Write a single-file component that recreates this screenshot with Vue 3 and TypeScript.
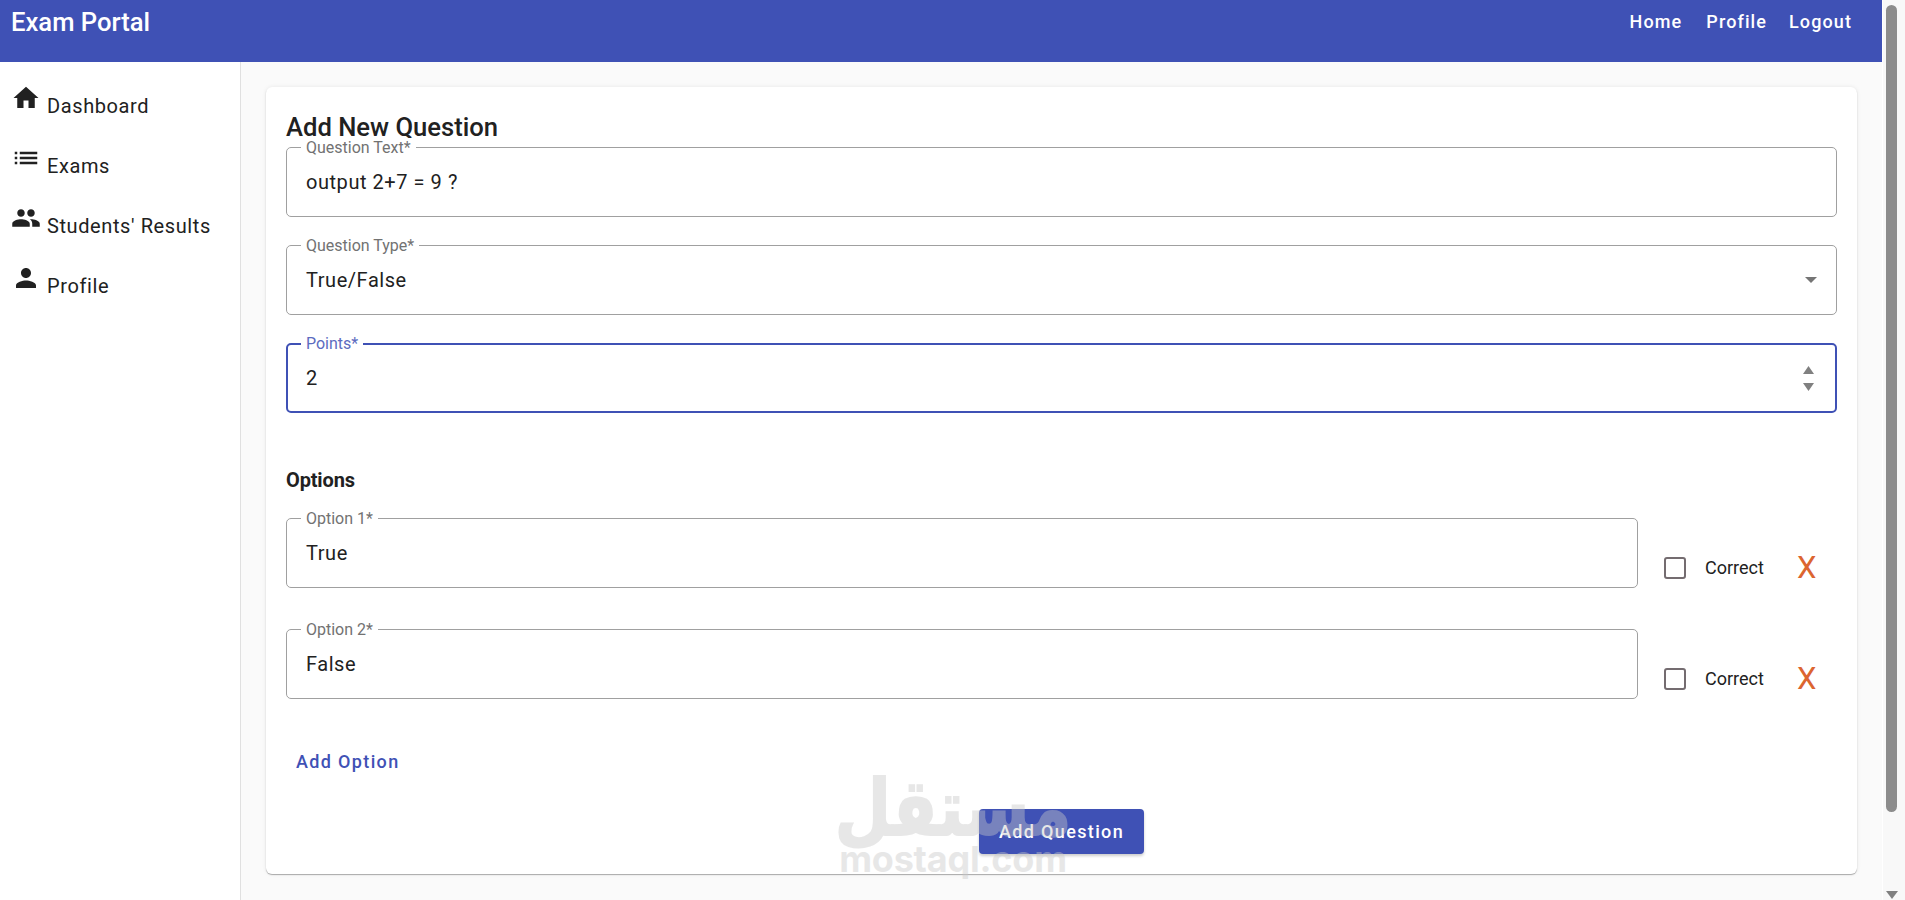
<script setup lang="ts">
const navLinks = ["Home", "Profile", "Logout"];

// MUI icon paths used in the sidebar
const sideItems = [
  { label: "Dashboard", path: "M10 20v-6h4v6h5v-8h3L12 3 2 12h3v8z" },
  { label: "Exams", path: "M3 13h2v-2H3zm0 4h2v-2H3zm0-8h2V7H3zm4 4h14v-2H7zm0 4h14v-2H7zM7 7v2h14V7z" },
  {
    label: "Students' Results",
    path: "M16 11c1.66 0 2.99-1.34 2.99-3S17.66 5 16 5c-1.66 0-3 1.34-3 3s1.34 3 3 3m-8 0c1.66 0 2.99-1.34 2.99-3S9.66 5 8 5C6.34 5 5 6.34 5 8s1.34 3 3 3m0 2c-2.33 0-7 1.17-7 3.5V19h14v-2.5c0-2.33-4.67-3.5-7-3.5m8 0c-.29 0-.62.02-.97.05 1.16.84 1.97 1.97 1.97 3.45V19h6v-2.5c0-2.33-4.67-3.5-7-3.5",
  },
  { label: "Profile", path: "M12 12c2.21 0 4-1.79 4-4s-1.79-4-4-4-4 1.79-4 4 1.79 4 4 4m0 2c-2.67 0-8 1.34-8 4v2h16v-2c0-2.66-5.33-4-8-4" },
];

const options = [
  { label: "Option 1*", value: "True" },
  { label: "Option 2*", value: "False" },
];
</script>

<template>
  <div class="window">
    <div class="page">
      <header class="topbar">
        <div class="brand">Exam Portal</div>
        <nav class="links">
          <a v-for="link in navLinks" :key="link" class="link">{{ link }}</a>
        </nav>
      </header>

      <div class="body-row">
        <aside class="sidebar">
          <div v-for="item in sideItems" :key="item.label" class="side-item">
            <svg class="side-icon" viewBox="0 0 24 24"><path :d="item.path" /></svg>
            <span class="side-label">{{ item.label }}</span>
          </div>
        </aside>

        <main class="content">
          <section class="card">
            <h2 class="title">Add New Question</h2>

            <div class="stack">
              <div class="field">
                <span class="field-label">Question Text*</span>
                <span class="value">output 2+7 = 9 ?</span>
              </div>

              <div class="field">
                <span class="field-label">Question Type*</span>
                <span class="value">True/False</span>
                <svg class="caret" viewBox="0 0 12 6"><path d="M0 0h12L6 6z" /></svg>
              </div>

              <div class="field focused">
                <span class="field-label">Points*</span>
                <span class="value">2</span>
                <span class="spinner">
                  <svg viewBox="0 0 11 8"><path d="M5.5 0 11 8H0z" /></svg>
                  <svg viewBox="0 0 11 8"><path d="M0 0h11L5.5 8z" /></svg>
                </span>
              </div>
            </div>

            <h3 class="options-title">Options</h3>

            <div class="option-list">
              <div v-for="opt in options" :key="opt.label" class="option-row">
                <div class="field grow">
                  <span class="field-label">{{ opt.label }}</span>
                  <span class="value">{{ opt.value }}</span>
                </div>
                <div class="option-controls">
                  <span class="checkbox"></span>
                  <span class="correct">Correct</span>
                  <span class="remove">X</span>
                </div>
              </div>
            </div>

            <div class="add-option">Add Option</div>

            <div class="submit-row">
              <button class="submit" type="button">Add Question</button>
            </div>
          </section>
        </main>
      </div>
    </div>

    <div class="scrollbar">
      <div class="thumb"></div>
      <svg class="arrow" viewBox="0 0 12 8"><path d="M0 0h12L6 8z" /></svg>
    </div>

    <!-- site watermark, lies over the page -->
    <div class="watermark">
      <div class="wm-ar" dir="rtl" lang="ar">مستقل</div>
      <div class="wm-en">mostaql.com</div>
    </div>
  </div>
</template>

<style>
html,
body {
  margin: 0;
  overflow: hidden;
}
</style>

<style scoped>
.window {
  position: relative;
  display: flex;
  width: 1905px;
  height: 900px;
  overflow: hidden;
  font-family: Roboto, "Liberation Sans", sans-serif;
  color: #212121;
  background: #fff;
}

.page {
  flex: 1;
  min-width: 0;
  display: flex;
  flex-direction: column;
}

.topbar {
  height: 62px;
  flex: none;
  background: #3f51b5;
  color: #fff;
  display: flex;
  justify-content: space-between;
  align-items: flex-start;
  padding: 0 30px 0 11px;
  box-sizing: border-box;
}

.brand {
  font-size: 25.6px;
  font-weight: 500;
  line-height: 44px;
}

.links {
  display: flex;
  gap: 22px;
}

.link {
  font-size: 18px;
  font-weight: 500;
  letter-spacing: 1.1px;
  line-height: 44px;
}

.link:first-child {
  margin-right: 2px;
}

.body-row {
  flex: 1;
  display: flex;
  min-height: 0;
}

.sidebar {
  width: 241px;
  flex: none;
  box-sizing: border-box;
  border-right: 1px solid #e0e0e0;
  padding: 21px 0 0 11px;
  background: #fff;
}

.side-item {
  height: 60px;
  white-space: nowrap;
  font-size: 20px;
  line-height: 36px;
}

.side-icon {
  width: 30px;
  height: 30px;
  fill: #212121;
  margin-right: 6px;
}

.side-label {
  letter-spacing: 0.6px;
}

.content {
  flex: 1;
  min-width: 0;
  background: #fafafa;
  padding: 25px;
  box-sizing: border-box;
}

.card {
  background: #fff;
  border-radius: 6px;
  box-shadow: 0 1px 1px rgba(0, 0, 0, 0.3), 0 0 4px rgba(0, 0, 0, 0.08);
  padding: 20px;
  height: 787px;
  box-sizing: border-box;
  display: flex;
  flex-direction: column;
}

.title {
  margin: 0;
  height: 40px;
  font-size: 25.6px;
  font-weight: 500;
  line-height: 40px;
}

.stack {
  display: flex;
  flex-direction: column;
  gap: 28px;
}

.field {
  position: relative;
  height: 70px;
  box-sizing: border-box;
  border: 1px solid #a0a0a0;
  border-radius: 5px;
  display: flex;
  align-items: center;
  justify-content: space-between;
  padding: 0 19px;
}

.field.focused {
  border: 2px solid #3f51b5;
  padding: 0 18px;
}

.field-label {
  position: absolute;
  left: 14px;
  top: -10px;
  padding: 0 5px;
  background: #fff;
  font-size: 16px;
  line-height: 20px;
  color: #727272;
}

.focused .field-label {
  left: 13px;
  top: -11px;
  color: #5c6bc0;
}

.value {
  font-size: 20px;
  letter-spacing: 0.55px;
}

.caret {
  width: 12px;
  height: 6px;
  fill: #757575;
}

.spinner {
  display: flex;
  flex-direction: column;
  gap: 9px;
  margin-right: 3px;
}

.spinner svg {
  display: block;
  width: 11px;
  height: 8px;
  fill: #808080;
}

.options-title {
  margin: 55px 0 0;
  height: 34px;
  font-size: 20px;
  font-weight: 700;
  line-height: 24px;
  letter-spacing: -0.15px;
}

.option-list {
  display: flex;
  flex-direction: column;
  gap: 41px;
  margin-top: 16px;
}

.option-row {
  display: flex;
  align-items: center;
}

.grow {
  flex: 1;
}

.option-controls {
  width: 199px;
  flex: none;
  display: flex;
  align-items: center;
  margin-top: 29px;
  padding-left: 26px;
  box-sizing: border-box;
}

.checkbox {
  width: 22px;
  height: 22px;
  box-sizing: border-box;
  border: 2px solid #746c70;
  border-radius: 3px;
}

.correct {
  margin-left: 19px;
  font-size: 18px;
}

.remove {
  margin-left: 33px;
  font-size: 31px;
  line-height: 34px;
  color: #dc6530;
}

.add-option {
  margin: 51px 0 0 10px;
  font-size: 18px;
  font-weight: 500;
  letter-spacing: 1.35px;
  line-height: 24px;
  color: #3f51b5;
}

.submit-row {
  margin-top: auto;
  display: flex;
  justify-content: center;
}

.submit {
  width: 165px;
  height: 45px;
  border: 0;
  border-radius: 4px;
  background: #3f51b5;
  color: #fff;
  font-family: inherit;
  font-size: 18px;
  font-weight: 500;
  letter-spacing: 1.35px;
  box-shadow: 0 2px 3px rgba(0, 0, 0, 0.2);
}

.scrollbar {
  width: 23px;
  flex: none;
  position: relative;
  background: #f8f8f8;
  border-left: 1px solid #fff;
  box-sizing: border-box;
}

.thumb {
  position: absolute;
  left: 3px;
  top: 5px;
  width: 11px;
  height: 807px;
  border-radius: 6px;
  background: #8c8c8c;
}

.arrow {
  position: absolute;
  left: 3px;
  bottom: 1px;
  width: 12px;
  height: 8px;
  fill: #808080;
}

.watermark {
  position: absolute;
  left: 838px;
  top: 770px;
  width: 230px;
  text-align: center;
  color: #c8c8c8;
  opacity: 0.42;
  pointer-events: none;
}

.wm-ar {
  font-family: "DejaVu Sans", sans-serif;
  font-weight: 700;
  font-size: 78px;
  line-height: 70px;
  -webkit-text-stroke: 2px #c8c8c8;
  transform: translate(23px, 3px) scaleX(0.83);
}

.wm-en {
  font-family: Inter, sans-serif;
  font-weight: 700;
  font-size: 36px;
  line-height: 38px;
  letter-spacing: -0.2px;
}
</style>
